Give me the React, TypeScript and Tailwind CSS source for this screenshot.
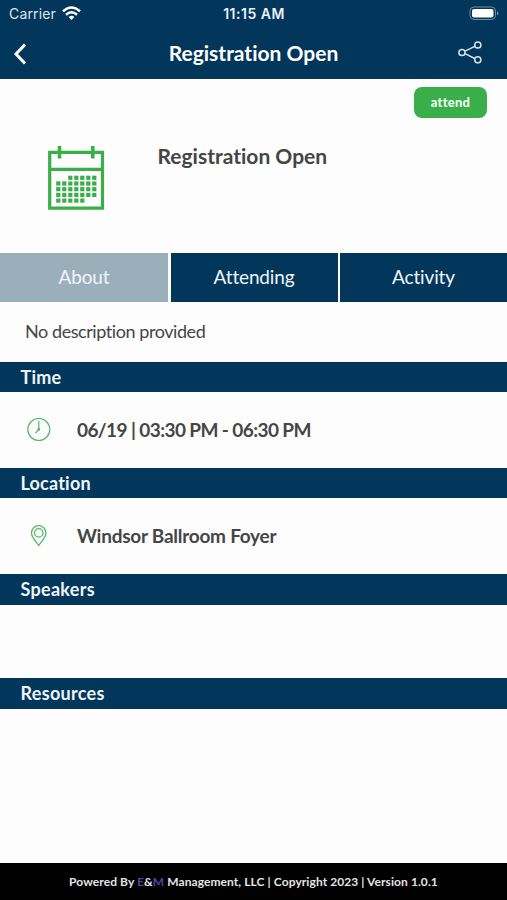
import type { ReactNode } from 'react';

// Filled day columns for each week row of the calendar.
const days = [
  [2, 3, 4, 5, 6],
  [0, 1, 2, 3, 4, 5, 6],
  [0, 1, 2, 3, 4, 5, 6],
  [0, 1, 2, 3, 4, 5, 6],
  [0, 1, 2, 3, 4],
];

function CalendarIcon() {
  return (
    <svg width="58" height="66" viewBox="0 0 58 66" fill="#3aae49">
      <path d="M1.7 6.3H54.5V62.2H1.7Z" fill="none" stroke="#3aae49" strokeWidth="3.2" />
      <path d="M1 21.7H56V24.9H1Z" />
      <path d="M9.7 0H13.3V12.5H9.7ZM43 0H46.6V12.5H43Z" />
      {days.map((row, r) =>
        row.map((c) => (
          <rect key={`${r}-${c}`} x={8.2 + c * 6} y={29.7 + r * 5.7} width="4.2" height="4.2" />
        )),
      )}
    </svg>
  );
}

function WifiIcon() {
  return (
    <svg width="19" height="15" viewBox="0 0 19 15" fill="none" stroke="#fff" strokeWidth="2.5">
      <path d="M1 5.3Q9.5 -2.4 18 5.3" />
      <path d="M4 8.7Q9.5 3.8 15 8.7" />
      <path d="M6.6 11.1Q9.5 8.4 12.4 11.1L9.5 14Z" fill="#fff" stroke="none" />
    </svg>
  );
}

function SectionBar({ children, className }: { children: ReactNode; className: string }) {
  return (
    <h2 className={`flex shrink-0 items-center bg-[#03365b] pl-[20.5px] pt-[1px] text-[18px] font-bold text-[#eef5fa] ${className}`}>
      {children}
    </h2>
  );
}

export default function App() {
  return (
    <div className="flex h-[900px] w-full flex-col overflow-hidden bg-[#fdfdfd] font-[Lato,sans-serif] text-[#454545] [font-variant-ligatures:none]">
      <header className="flex h-[79px] shrink-0 flex-col bg-[#03365b] text-white">
        <div className="grid h-[27px] grid-cols-3 items-center pl-[9px] pr-[8px] font-[Inter,sans-serif]">
          <div className="flex items-center gap-[6px] text-[14px] tracking-[0.15px] text-[#dce7ef]">
            <span>Carrier</span>
            <WifiIcon />
          </div>
          <span className="text-center text-[14px] font-semibold tracking-[0.5px] text-[#e8f1f7]">11:15 AM</span>
          <svg className="justify-self-end" width="30" height="15" viewBox="0 0 30 15">
            <rect x="1" y="1" width="25.5" height="12.5" rx="4" fill="none" stroke="#718ea3" />
            <rect x="3" y="3" width="21.5" height="8.5" rx="2" fill="#fff" />
            <path d="M28 5.2Q31 7.2 28 9.4Z" fill="#718ea3" />
          </svg>
        </div>
        <div className="grid h-[52px] grid-cols-[60px_1fr_60px] items-center">
          <svg className="ml-[12px] mt-[2px]" width="14" height="22" viewBox="0 0 14 22" fill="none" stroke="#fff" strokeWidth="3">
            <path d="M13 1.5L4 11L13 20.5" />
          </svg>
          <h1 className="text-center text-[21px] font-bold">Registration Open</h1>
          <svg className="ml-[11px]" width="24" height="24" viewBox="0 0 24 24" fill="none" stroke="#d5e2ec" strokeWidth="1.5">
            <path d="M7 10.1L16.8 5.3M7 12.7L16.8 17.5" />
            <circle cx="4" cy="11.5" r="3.1" />
            <circle cx="19.8" cy="4" r="3.1" />
            <circle cx="19.8" cy="18.8" r="3.1" />
          </svg>
        </div>
      </header>

      <section className="flex h-[173.5px] shrink-0">
        <div className="pl-[48px] pt-[66.5px]">
          <CalendarIcon />
        </div>
        <h2 className="ml-[51.5px] mt-[64px] text-[21px] leading-[26px] font-bold">Registration Open</h2>
        <button className="ml-auto mr-[20px] mt-[8px] h-[31px] w-[73px] rounded-[8px] bg-[#3aae49] text-[13px] font-black tracking-[0.2px] text-[#eefbef]">
          attend
        </button>
      </section>

      <nav className="grid h-[49px] shrink-0 grid-cols-[168px_167px_1fr] gap-[2.5px] text-[19px] tracking-[-0.15px] text-[#eef5fa]">
        <button className="bg-[#9bafbb]">About</button>
        <button className="bg-[#03365b]">Attending</button>
        <button className="bg-[#03365b]">Activity</button>
      </nav>

      <p className="flex h-[60px] shrink-0 items-center pl-[25px] text-[18px] tracking-[-0.43px]">No description provided</p>

      <SectionBar className="h-[30.5px] tracking-[0.2px]">Time</SectionBar>
      <div className="flex h-[75.5px] shrink-0 items-center pl-[27px]">
        <svg width="24" height="24" viewBox="0 0 24 24" fill="none" stroke="#55b967" strokeWidth="1.2">
          <circle cx="11.8" cy="11.5" r="11" />
          <path d="M11.8 3V11.5L8.4 15.1" />
          <circle cx="11.8" cy="11.5" r="0.8" fill="#55b967" />
        </svg>
        <span className="ml-[26px] text-[19px] font-bold tracking-[-0.6px]">06/19 | 03:30 PM - 06:30 PM</span>
      </div>

      <SectionBar className="h-[30.5px] tracking-[0.2px]">Location</SectionBar>
      <div className="flex h-[76px] shrink-0 items-center pl-[30px]">
        <svg width="18" height="22" viewBox="0 0 18 22" fill="none" stroke="#55b967" strokeWidth="1.3">
          <path d="M8.7 20.5C6.6 17 1.5 12.5 1.5 7.9A7.2 7.2 0 0 1 15.9 7.9C15.9 12.5 10.8 17 8.7 20.5Z" />
          <circle cx="8.7" cy="7.9" r="4.2" />
        </svg>
        <span className="ml-[29px] text-[19px] font-bold tracking-[-0.25px]">Windsor Ballroom Foyer</span>
      </div>

      <SectionBar className="h-[30.5px] tracking-[0.3px]">Speakers</SectionBar>
      <div className="h-[73.5px] shrink-0" />
      <SectionBar className="h-[30.5px] tracking-[0.3px]">Resources</SectionBar>
      <div className="grow" />

      <footer className="flex h-[37px] shrink-0 items-center justify-center bg-black text-[12px] font-bold tracking-[0.08px] text-[#e4e4e4]">
        <p>
          Powered By <span className="text-[#5044a0]">E</span>&amp;<span className="text-[#5044a0]">M</span> Management, LLC | Copyright 2023 | Version 1.0.1
        </p>
      </footer>
    </div>
  );
}
